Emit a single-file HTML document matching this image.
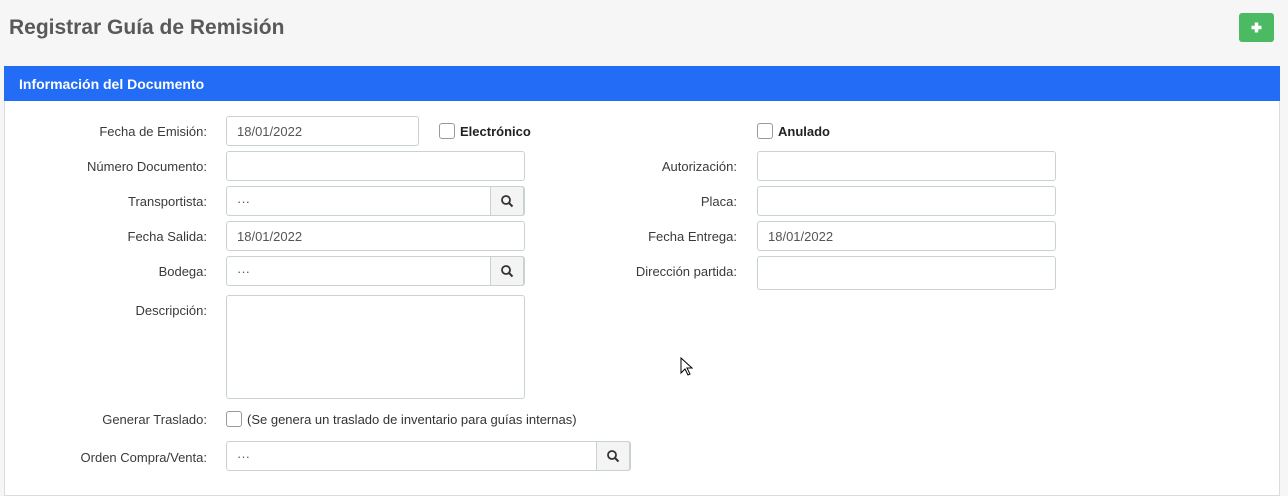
<!DOCTYPE html>
<html><head><meta charset="utf-8"><style>
*{box-sizing:border-box;margin:0;padding:0}
body{width:1288px;height:488px;background:#f6f6f6;font-family:"Liberation Sans",sans-serif;color:#333;overflow:hidden;position:relative;font-size:13px}
.a{position:absolute}
h1{position:absolute;left:9px;top:16px;font-size:21px;font-weight:bold;color:#595959;}
.btn{left:1239px;top:13px;width:35px;height:29px;background:#4cb963;border-radius:3px}
.panel{left:4px;top:66px;width:1276px;height:430px;background:#fff;border:1px solid #d8dde0}
.ph{left:4px;top:66px;width:1276px;height:35px;background:#226cf6;color:#fff;font-weight:bold;font-size:14px;padding:10px 15px}
.lbl{text-align:right;width:200px;font-size:13px;color:#3a3a3a}
.in{border:1px solid #c9d2d3;border-radius:3px;background:#fff;height:30px;padding:7px 10px;color:#555;font-size:13px}
.sb{position:absolute;right:0;top:-1px;width:34px;height:30px;border:1px solid #c9d2d3;border-radius:0 3px 3px 0;background:#f4f4f4}
.cb{width:16px;height:16px;border:1px solid #999;border-radius:3px;background:#fff}
</style></head><body>
<h1>Registrar Guía de Remisión</h1>
<div class="a btn"><svg width="35" height="29"><path d="M17.5 9.5v10M12.5 14.5h10" stroke="#fff" stroke-width="3.5"/></svg></div>
<div class="a panel"></div>
<div class="a ph">Información del Documento</div>

<div class="a lbl" style="left:7px;top:124px">Fecha de Emisión:</div>
<div class="a in" style="left:226px;top:116px;width:193px">18/01/2022</div>
<div class="a cb" style="left:439px;top:123px"></div>
<div class="a" style="left:460px;top:124px;font-weight:bold;color:#222">Electrónico</div>
<div class="a cb" style="left:757px;top:123px"></div>
<div class="a" style="left:778px;top:124px;font-weight:bold;color:#222">Anulado</div>

<div class="a lbl" style="left:7px;top:159px">Número Documento:</div>
<div class="a in" style="left:226px;top:151px;width:299px"></div>
<div class="a lbl" style="left:537px;top:159px">Autorización:</div>
<div class="a in" style="left:757px;top:151px;width:299px"></div>

<div class="a lbl" style="left:7px;top:194px">Transportista:</div>
<div class="a in" style="left:226px;top:186px;width:299px">···<div class="sb"><svg width="32" height="28"><circle cx="15" cy="13" r="4" fill="none" stroke="#333" stroke-width="1.8"/><path d="M18 16l3.5 3.5" stroke="#333" stroke-width="2"/></svg></div></div>
<div class="a lbl" style="left:537px;top:194px">Placa:</div>
<div class="a in" style="left:757px;top:186px;width:299px"></div>

<div class="a lbl" style="left:7px;top:229px">Fecha Salida:</div>
<div class="a in" style="left:226px;top:221px;width:299px">18/01/2022</div>
<div class="a lbl" style="left:537px;top:229px">Fecha Entrega:</div>
<div class="a in" style="left:757px;top:221px;width:299px">18/01/2022</div>

<div class="a lbl" style="left:7px;top:264px">Bodega:</div>
<div class="a in" style="left:226px;top:256px;width:299px">···<div class="sb"><svg width="32" height="28"><circle cx="15" cy="13" r="4" fill="none" stroke="#333" stroke-width="1.8"/><path d="M18 16l3.5 3.5" stroke="#333" stroke-width="2"/></svg></div></div>
<div class="a lbl" style="left:537px;top:264px">Dirección partida:</div>
<div class="a in" style="left:757px;top:256px;width:299px;height:34px"></div>

<div class="a lbl" style="left:7px;top:303px">Descripción:</div>
<div class="a in" style="left:226px;top:295px;width:299px;height:104px"></div>

<div class="a lbl" style="left:7px;top:412px">Generar Traslado:</div>
<div class="a cb" style="left:226px;top:411px"></div>
<div class="a" style="left:247px;top:412px">(Se genera un traslado de inventario para guías internas)</div>

<div class="a lbl" style="left:7px;top:450px">Orden Compra/Venta:</div>
<div class="a in" style="left:226px;top:441px;width:405px">···<div class="sb"><svg width="32" height="28"><circle cx="15" cy="13" r="4" fill="none" stroke="#333" stroke-width="1.8"/><path d="M18 16l3.5 3.5" stroke="#333" stroke-width="2"/></svg></div></div>
<svg class="a" style="left:680px;top:357px" width="14" height="20"><path d="M1 1v15l4-4 3 6 2-1-3-6h5z" fill="#fff" stroke="#000" stroke-width="1"/></svg>
</body></html>
